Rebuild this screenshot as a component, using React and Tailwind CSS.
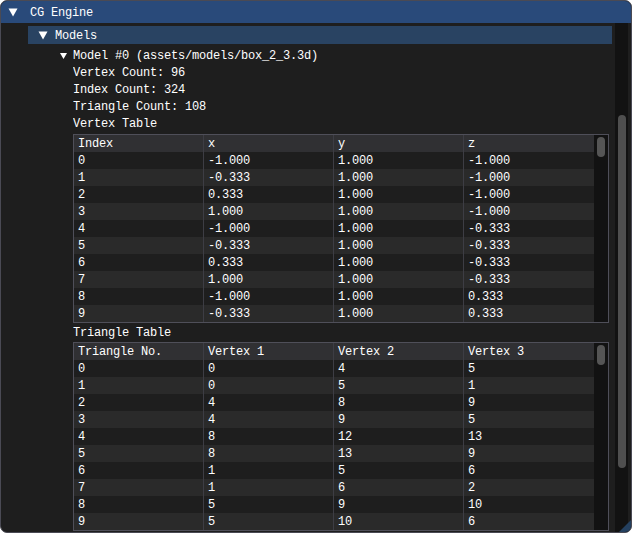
import React from "react";

const vertexRows = [
  ["0", "-1.000", "1.000", "-1.000"],
  ["1", "-0.333", "1.000", "-1.000"],
  ["2", "0.333", "1.000", "-1.000"],
  ["3", "1.000", "1.000", "-1.000"],
  ["4", "-1.000", "1.000", "-0.333"],
  ["5", "-0.333", "1.000", "-0.333"],
  ["6", "0.333", "1.000", "-0.333"],
  ["7", "1.000", "1.000", "-0.333"],
  ["8", "-1.000", "1.000", "0.333"],
  ["9", "-0.333", "1.000", "0.333"],
];

const triRows = [
  ["0", "0", "4", "5"],
  ["1", "0", "5", "1"],
  ["2", "4", "8", "9"],
  ["3", "4", "9", "5"],
  ["4", "8", "12", "13"],
  ["5", "8", "13", "9"],
  ["6", "1", "5", "6"],
  ["7", "1", "6", "2"],
  ["8", "5", "9", "10"],
  ["9", "5", "10", "6"],
];

function Arrow({ size = "big" }) {
  if (size === "big") {
    return (
      <svg width="10" height="9" viewBox="0 0 10 9" className="block">
        <polygon points="0.5,0.5 9.5,0.5 5,8.5" fill="#ffffff" />
      </svg>
    );
  }
  return (
    <svg width="7" height="6" viewBox="0 0 7 6" className="block">
      <polygon points="0,0 7,0 3.5,6" fill="#ffffff" />
    </svg>
  );
}

function Cell({ children, last }) {
  return (
    <div
      className={
        "h-[17px] leading-[19px] pl-[4px] whitespace-nowrap overflow-hidden " +
        (last ? "w-[130px]" : "w-[130px] border-r border-[#3d3d44]")
      }
    >
      {children}
    </div>
  );
}

function Row({ cells, bg }) {
  return (
    <div className={"flex " + bg}>
      {cells.map((c, i) => (
        <Cell key={i} last={i === 3}>
          {c}
        </Cell>
      ))}
    </div>
  );
}

function Table({ headers, rows }) {
  return (
    <div className="w-[536px] border border-[#4f4f59] flex">
      <div className="w-[520px] flex flex-col">
        <Row cells={headers} bg="bg-[#303033]" />
        {rows.map((r, i) => (
          <Row key={i} cells={r} bg={i % 2 === 0 ? "bg-[#1e1e1e]" : "bg-[#2a2a2a]"} />
        ))}
      </div>
      <div className="w-[14px] bg-[#121212] pt-[2px] flex justify-center">
        <div className="w-[8px] h-[20px] rounded-full bg-[#555555]" />
      </div>
    </div>
  );
}

function Line({ children }) {
  return <div className="h-[17px] leading-[19px] overflow-hidden whitespace-nowrap">{children}</div>;
}

export default function App() {
  return (
    <div className="w-[632px] h-[533px] bg-white">
      <div className="w-[632px] h-[533px] rounded-[7px] border border-[#4a4a54] bg-[#1e1e1e] overflow-hidden flex flex-col text-white font-['Liberation_Mono',monospace] text-[12px] tracking-[-0.2px] relative">
        <div className="h-[22px] shrink-0 bg-[#294a7a] flex items-center pl-[7px]">
          <Arrow />
          <span className="ml-[12px] leading-[22px] relative top-[1px]">CG Engine</span>
        </div>
        <div className="flex flex-1 min-h-0">
          <div className="w-[614px] flex flex-col">
            <div className="ml-[27px] mt-[3px] w-[584px] h-[18px] bg-[#294362] flex items-center pl-[10px]">
              <Arrow />
              <span className="ml-[7px] leading-[18px] relative top-[1px]">Models</span>
            </div>
            <div className="mt-[3px] h-[17px] flex items-center pl-[59px]">
              <Arrow size="small" />
              <span className="ml-[6px] leading-[17px] relative top-[1px]">Model #0 (assets/models/box_2_3.3d)</span>
            </div>
            <div className="pl-[72px] flex flex-col">
              <Line>Vertex Count: 96</Line>
              <Line>Index Count: 324</Line>
              <Line>Triangle Count: 108</Line>
              <Line>Vertex Table</Line>
              <div className="mt-[2px]">
                <Table headers={["Index", "x", "y", "z"]} rows={vertexRows} />
              </div>
              <div className="mt-[1px]">
                <Line>Triangle Table</Line>
              </div>
              <div className="mt-[1px]">
                <Table headers={["Triangle No.", "Vertex 1", "Vertex 2", "Vertex 3"]} rows={triRows} />
              </div>
            </div>
          </div>
          <div className="w-[13px] bg-[#121212] pt-[92px] flex justify-center">
            <div className="w-[8px] h-[353px] rounded-full bg-[#4f4f4f]" />
          </div>
        </div>
        <svg width="12" height="12" viewBox="0 0 12 12" className="absolute right-0 bottom-0">
          <polygon points="12,0 12,12 0,12" fill="#24405f" />
        </svg>
      </div>
    </div>
  );
}
